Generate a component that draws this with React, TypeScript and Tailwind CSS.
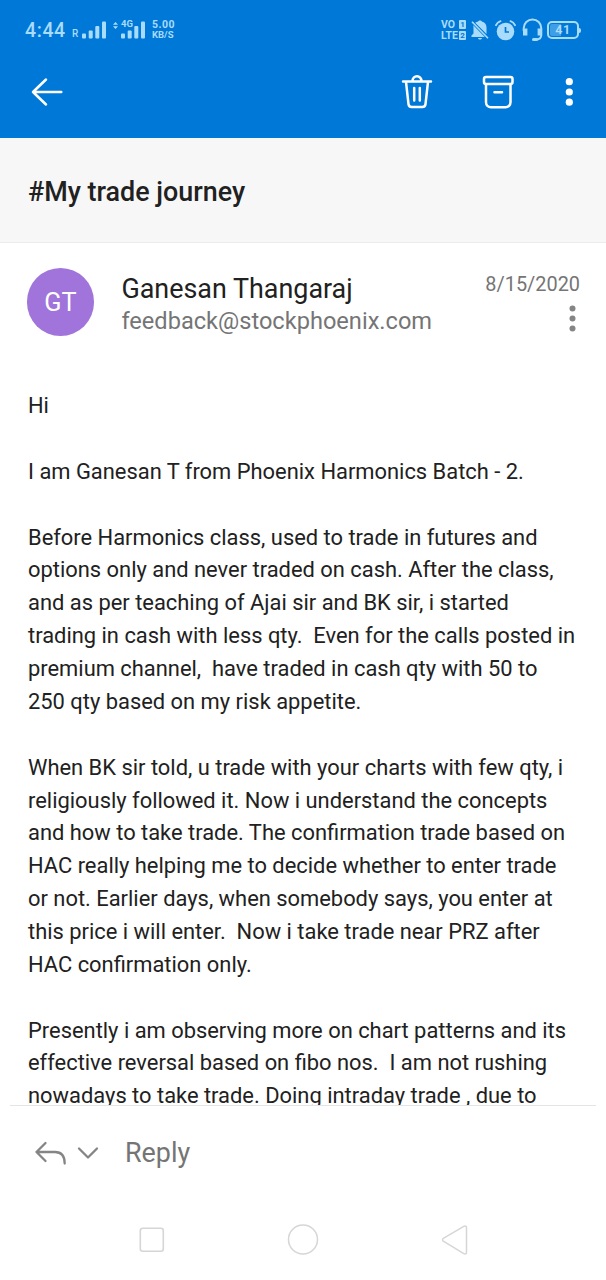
const paragraphs = [
  ["Hi"],
  ["I am Ganesan T from Phoenix Harmonics Batch - 2."],
  [
    "Before Harmonics class, used to trade in futures and",
    "options only and never traded on cash. After the class,",
    "and as per teaching of Ajai sir and BK sir, i started",
    "trading in cash with less qty.  Even for the calls posted in",
    "premium channel,  have traded in cash qty with 50 to",
    "250 qty based on my risk appetite.",
  ],
  [
    "When BK sir told, u trade with your charts with few qty, i",
    "religiously followed it. Now i understand the concepts",
    "and how to take trade. The confirmation trade based on",
    "HAC really helping me to decide whether to enter trade",
    "or not. Earlier days, when somebody says, you enter at",
    "this price i will enter.  Now i take trade near PRZ after",
    "HAC confirmation only.",
  ],
  [
    "Presently i am observing more on chart patterns and its",
    "effective reversal based on fibo nos.  I am not rushing",
    "nowadays to take trade. Doing intraday trade , due to",
  ],
];

export default function App() {
  return (
    <div className="flex h-[1280px] w-[606px] flex-col overflow-hidden bg-white font-['Roboto',sans-serif] text-[#212121]">
      <header className="h-[138px] shrink-0 bg-[#0078d7]">
        <StatusBar />
        <Toolbar />
      </header>
      <div className="flex h-[105px] shrink-0 items-center border-b border-[#ececec] bg-[#f7f7f7] pt-[3px] pl-7">
        <h1 className="text-[26.9px] leading-8 font-medium">#My trade journey</h1>
      </div>
      <Sender />
      <MessageBody />
      <ReplyBar />
      <NavigationBar />
    </div>
  );
}

function StatusBar() {
  return (
    <div className="flex h-[60px] items-center text-[#a9dcfb]">
      <span className="ml-[25px] w-[47px] pt-[1px] text-[19.5px] leading-6 font-medium tracking-[0.6px]">4:44</span>
      <span className="w-[10px] pt-[7px] text-[10px] leading-3 font-medium">R</span>
      <SignalBars />
      <div className="relative ml-[14px]">
        <SignalBars />
        <span className="absolute -top-[1px] left-0 bg-[#0078d7] text-[9.5px] leading-[8px] font-bold">4G</span>
        <svg className="absolute top-[1px] -left-[8px]" width="5" height="7" viewBox="0 0 5 7" fill="currentColor">
          <path d="M2.5 0 5 2.8H0zM2.5 7 0 4.2h5z" />
        </svg>
      </div>
      <div className="ml-[6px] w-[30px] text-[10.5px] leading-[10px] font-bold">
        <div className="tracking-[0.5px]">5.00</div>
        <div className="text-[9.5px]">KB/S</div>
      </div>
      <div className="ml-auto flex items-center pr-[25px]">
        <div className="mr-[5px] w-[25px] text-[10.5px] leading-[11px] font-bold">
          <div className="flex items-center justify-between">
            VO <SimBadge label="1" />
          </div>
          <div className="flex items-center justify-between">
            LTE <SimBadge label="2" />
          </div>
        </div>
        <svg width="18" height="20" viewBox="0 0 18 20" fill="currentColor">
          <path d="M4.2 2.8C5 2 6 1.6 7.2 1.4 7.4.3 10.6.3 10.8 1.4c2.8.7 4.7 2.9 4.7 5.9v6.6zM2.3 5.3 13.8 17H.5v-1.4l2-2V7.6c0-.8-.3-1.5-.2-2.3zM7 18h4c-.5 2-3.5 2-4 0z" />
          <path d="m1 1.700 16 16.500" stroke="currentColor" strokeWidth="1.6" />
        </svg>
        <svg className="ml-[6px]" width="21" height="21" viewBox="0 0 21 21" fill="none">
          <circle cx="10.5" cy="11.5" r="8.8" fill="currentColor" />
          <path d="M1 5.2C2 3 3.5 1.8 5.5 1.2M20 5.2c-1-2.2-2.5-3.4-4.5-4" stroke="currentColor" strokeWidth="1.9" strokeLinecap="round" />
          <path d="M10.5 7v5H14" stroke="#0078d7" strokeWidth="1.7" />
        </svg>
        <svg className="ml-[6px]" width="21" height="24" viewBox="0 0 21 24" fill="none" stroke="currentColor">
          <path d="M1.7 13v-2.800a8.800 8.800 0 0 1 17.600 0V17c0 3-2 4.500-6 4.500" strokeWidth="2" />
          <path d="M3.200 10.500v7M17.800 10.500v7" strokeWidth="4.4" />
          <path d="M11.500 21.500h3" strokeWidth="3" strokeLinecap="round" />
        </svg>
        <div className="ml-[4px] flex items-center">
          <div className="h-[18px] w-[32px] rounded-[5px] border-2 border-current p-[1px]">
            <div className="flex h-full w-full items-center justify-center rounded-[2px] bg-linear-to-r from-[#3f9fe6] from-41% to-transparent to-41% text-[12.5px] leading-none font-bold tracking-[0.5px]">
              41
            </div>
          </div>
          <div className="h-[5px] w-[2px] rounded-r bg-current" />
        </div>
      </div>
    </div>
  );
}

function SimBadge({ label }: { label: string }) {
  return (
    <span className="flex h-[9px] w-[7px] items-center justify-center rounded-[1px] bg-current text-[8px] leading-none">
      <span className="text-[#0078d7]">{label}</span>
    </span>
  );
}

function SignalBars() {
  return (
    <svg width="25" height="18" viewBox="0 0 25 18" fill="currentColor">
      <rect x="0" y="12.5" width="4" height="5" rx="1" />
      <rect x="6.7" y="9.5" width="4" height="8" rx="1" />
      <rect x="13.3" y="5" width="4" height="12.5" rx="1" />
      <rect x="20" y="0.5" width="4" height="17" rx="1" />
    </svg>
  );
}

function Toolbar() {
  return (
    <div className="flex h-[64px] items-center pr-[33px] pl-[30px] text-white">
      <svg width="34" height="30" viewBox="0 0 34 30" fill="none" stroke="currentColor" strokeWidth="2.5" strokeLinecap="round" strokeLinejoin="round">
        <path d="M16 2.5 3 15l13 12.500M3 15h28.300" />
      </svg>
      <svg className="ml-auto" width="32" height="36" viewBox="0 0 32 36" fill="none" stroke="currentColor" strokeWidth="2.5" strokeLinecap="round" strokeLinejoin="round">
        <path d="M2 7.5h28M11.500 7.200a4.500 5 0 0 1 9 0M5 7.800l2.500 22.400a3.200 3.200 0 0 0 3.200 2.900h10.600a3.200 3.200 0 0 0 3.200-2.900L27 7.800M13.200 14v12.500M18.800 14v12.500" />
      </svg>
      <svg className="ml-[49px]" width="32" height="36" viewBox="0 0 32 36" fill="none" stroke="currentColor" strokeWidth="2.5" strokeLinecap="round" strokeLinejoin="round">
        <rect x="2" y="3" width="28.5" height="7" rx="2" />
        <path d="M4 10.5v17.800a5 5 0 0 0 5 5h14.500a5 5 0 0 0 5-5V10.500M12.500 18.300h7.500" />
      </svg>
      <svg className="ml-[51px]" width="8" height="30" viewBox="0 0 8 30" fill="currentColor">
        <circle cx="4.3" cy="4.7" r="3.6" />
        <circle cx="4.3" cy="15" r="3.6" />
        <circle cx="4.3" cy="25.2" r="3.6" />
      </svg>
    </div>
  );
}

function Sender() {
  return (
    <section className="flex h-[146px] shrink-0 pt-[25px] pr-[26px] pl-[27px]">
      <div className="flex h-[68px] w-[67px] shrink-0 items-center justify-center rounded-full bg-[#a074da] pt-[2px] text-[25.3px] leading-none text-white">
        GT
      </div>
      <div className="ml-[27.4px] pt-[4px]">
        <div className="text-[26.9px] leading-[34px] whitespace-nowrap">Ganesan Thangaraj</div>
        <div className="text-[23.6px] leading-[31px] text-[#757575]">feedback@stockphoenix.com</div>
      </div>
      <div className="ml-auto flex flex-col items-end">
        <div className="pt-[5px] text-[19.9px] leading-6 text-[#757575]">8/15/2020</div>
        <svg className="mt-[7px] mr-[3px]" width="8" height="30" viewBox="0 0 8 30" fill="#858585">
          <circle cx="3.5" cy="4.5" r="3" />
          <circle cx="3.5" cy="14.5" r="3" />
          <circle cx="3.5" cy="24.5" r="3" />
        </svg>
      </div>
    </section>
  );
}

function MessageBody() {
  return (
    <main className="h-[716px] shrink-0 overflow-hidden pt-[1.2px] pl-7 text-[21.9px] leading-[32.86px]">
      {paragraphs.map((lines, idx) => (
        <p key={idx} className="mb-[32.86px] whitespace-pre">
          {lines.join("\n")}
        </p>
      ))}
    </main>
  );
}

function ReplyBar() {
  return (
    <div className="mx-[10px] flex h-[95px] shrink-0 items-center border-t border-[#e4e4e4] pl-[24px] text-[#757575]">
      <svg width="34" height="26" viewBox="0 0 34 26" fill="none" stroke="#858585" strokeWidth="2.3" strokeLinecap="round" strokeLinejoin="round">
        <path d="M11.5 3 2.500 12l9 9M2.500 12h18.500c6 0 9.700 4 9.700 11.500" />
      </svg>
      <svg className="ml-[9px]" width="22" height="14" viewBox="0 0 22 14" fill="none" stroke="#858585" strokeWidth="2.3" strokeLinecap="round" strokeLinejoin="round">
        <path d="m2 2.500 9 9 9-9" />
      </svg>
      <span className="ml-[26px] text-[26.9px] leading-8">Reply</span>
    </div>
  );
}

function NavigationBar() {
  return (
    <nav className="flex h-[80px] shrink-0 items-center justify-between px-[138px] text-[#d6d6d6]">
      <svg width="28" height="28" viewBox="0 0 28 28" fill="none" stroke="currentColor" strokeWidth="1.6">
        <rect x="2.3" y="2.3" width="23" height="23" rx="2.5" />
      </svg>
      <svg width="32" height="32" viewBox="0 0 32 32" fill="none" stroke="currentColor" strokeWidth="1.5">
        <circle cx="16" cy="15.5" r="14.5" />
      </svg>
      <svg width="28" height="32" viewBox="0 0 28 32" fill="none" stroke="currentColor" strokeWidth="1.5" strokeLinejoin="round">
        <path d="M3.3 14.3 23.8 2.3c1.5-.8 2.7-.2 2.7 1.4v24.6c0 1.6-1.2 2.2-2.7 1.4L3.3 17.2c-1-.7-1-2.2 0-2.9z" />
      </svg>
    </nav>
  );
}
